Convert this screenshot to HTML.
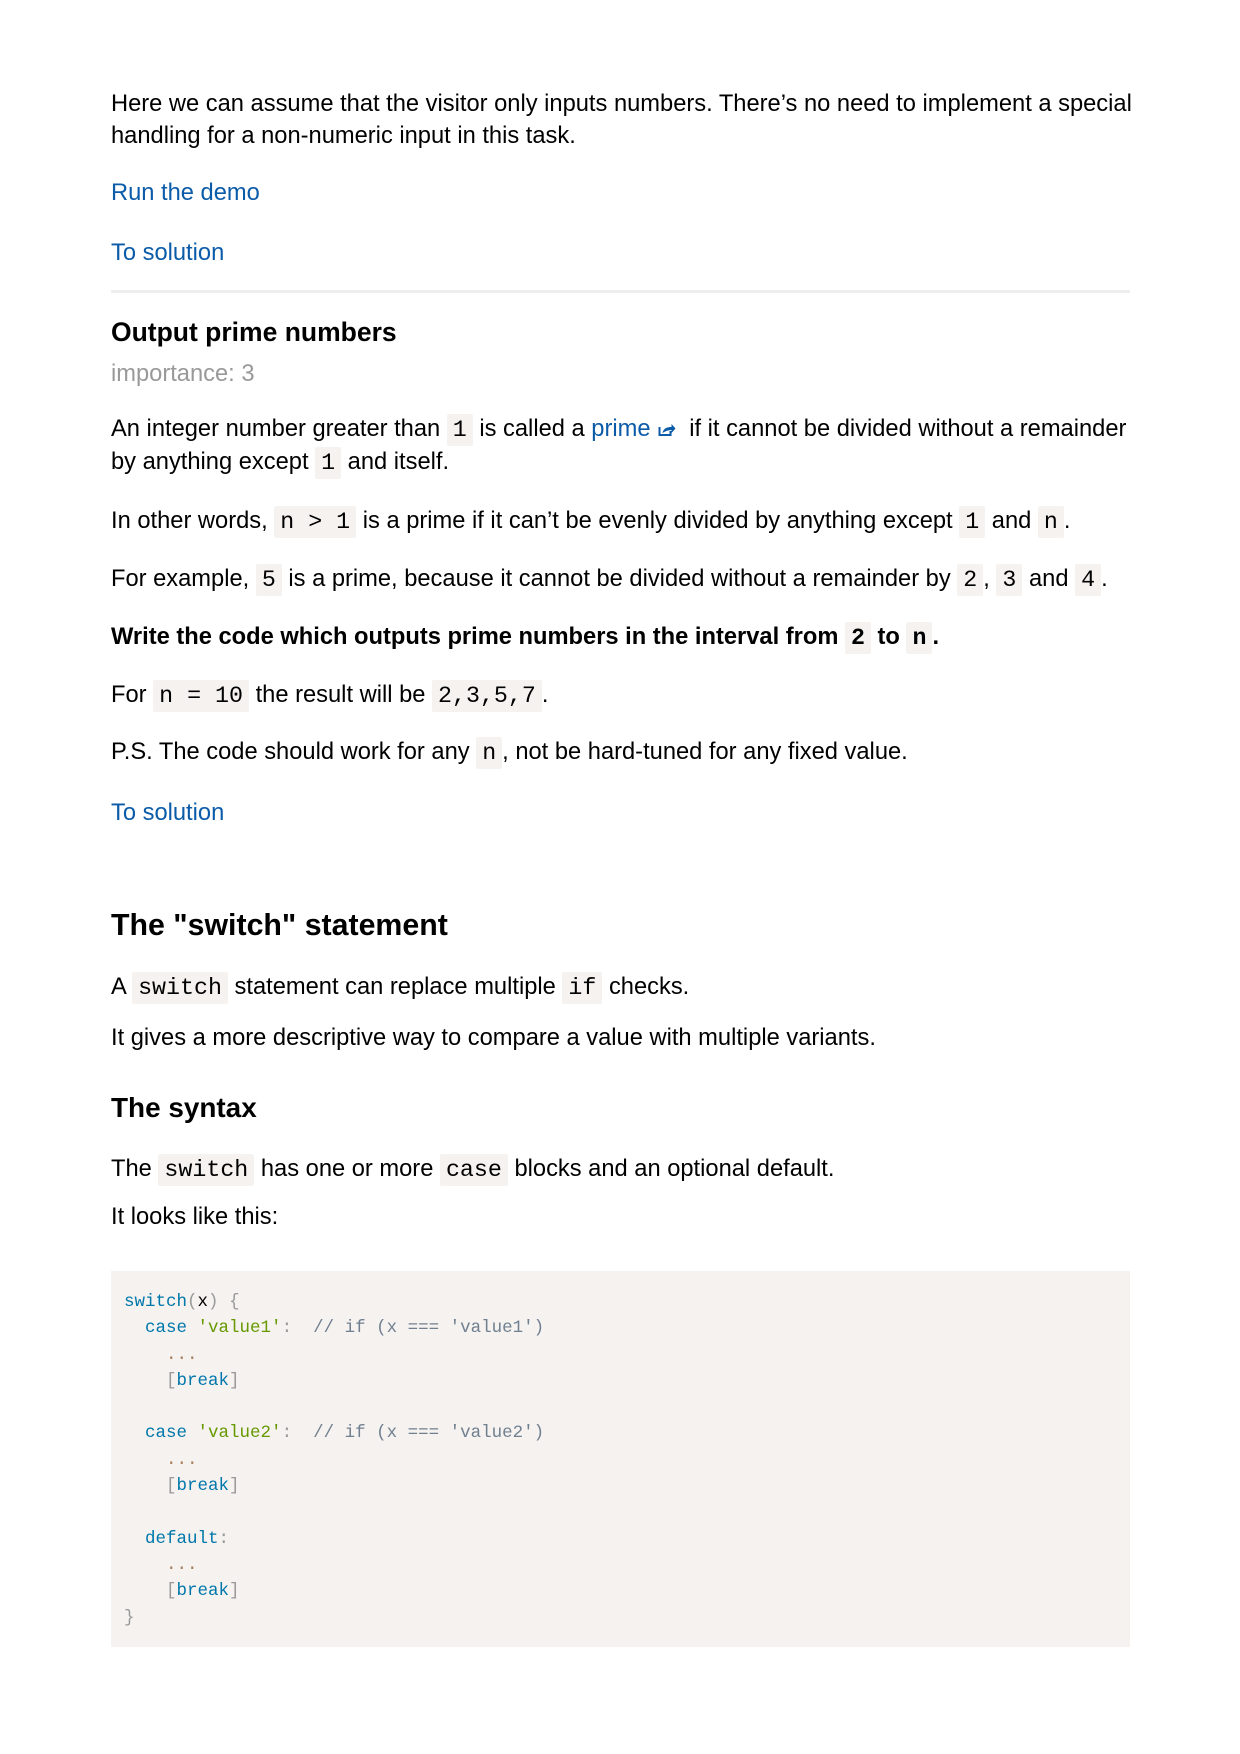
<!DOCTYPE html>
<html><head><meta charset="utf-8"><style>
body{margin:0;width:1240px;height:1754px;background:#fff;position:relative;font-family:"Liberation Sans",Arial,sans-serif;color:#000;font-size:23.7px}
.l{position:absolute;left:111px;white-space:nowrap;line-height:32px;height:32px}
a{color:#0b5ba9;text-decoration:none}
code{font-family:"Liberation Mono",monospace;font-size:23.3px;background:#f5f2f0;padding:3px 6px;border-radius:2px}
.b{font-weight:bold}
pre{position:absolute;left:111px;top:1271px;width:1019px;height:376px;margin:0;background:#f5f2f0;box-sizing:border-box;padding:18px 13px;font-family:"Liberation Mono",monospace;font-size:17.5px;line-height:26.3px;color:#000}
.k{color:#07a}.s{color:#690}.c{color:#708090}.p{color:#999}.o{color:#a67f59}
</style></head><body>
<div class="l" style="top:88px">Here we can assume that the visitor only inputs numbers. There’s no need to implement a special</div>
<div class="l" style="top:120px">handling for a non-numeric input in this task.</div>
<div class="l" style="top:177px"><a>Run the demo</a></div>
<div class="l" style="top:237px"><a>To solution</a></div>
<div style="position:absolute;left:111px;top:290px;width:1019px;height:3px;background:#eee"></div>
<div class="l b" style="top:316px;font-size:26.5px">Output prime numbers</div>
<div class="l" style="top:358px;color:#999">importance: 3</div>
<div class="l" style="top:413px">An integer number greater than <code>1</code> is called a <a>prime <svg width="19" height="16" viewBox="0 0 18 16" style="vertical-align:-1px"><path d="M2 6v8h11v-4" fill="none" stroke="#0b5ba9" stroke-width="2"/><path d="M5 12c1-5 5-6 9-6V3l4 4.5-4 4.5V9c-3 0-6 1-9 3z" fill="#0b5ba9"/></svg></a>&nbsp; if it cannot be divided without a remainder</div>
<div class="l" style="top:446px">by anything except <code>1</code> and itself.</div>
<div class="l" style="top:505px">In other words, <code>n &gt; 1</code> is a prime if it can’t be evenly divided by anything except <code>1</code> and <code>n</code>.</div>
<div class="l" style="top:563px">For example, <code>5</code> is a prime, because it cannot be divided without a remainder by <code>2</code>, <code>3</code> and <code>4</code>.</div>
<div class="l b" style="top:621px">Write the code which outputs prime numbers in the interval from <code>2</code> to <code>n</code>.</div>
<div class="l" style="top:679px">For <code>n = 10</code> the result will be <code>2,3,5,7</code>.</div>
<div class="l" style="top:736px">P.S. The code should work for any <code>n</code>, not be hard-tuned for any fixed value.</div>
<div class="l" style="top:797px"><a>To solution</a></div>
<div class="l b" style="top:908px;font-size:30.3px;height:36px;line-height:36px">The "switch" statement</div>
<div class="l" style="top:971px">A <code>switch</code> statement can replace multiple <code>if</code> checks.</div>
<div class="l" style="top:1022px">It gives a more descriptive way to compare a value with multiple variants.</div>
<div class="l b" style="top:1092px;font-size:27.9px">The syntax</div>
<div class="l" style="top:1153px">The <code>switch</code> has one or more <code>case</code> blocks and an optional default.</div>
<div class="l" style="top:1201px">It looks like this:</div>
<pre><span class="k">switch</span><span class="p">(</span>x<span class="p">)</span> <span class="p">{</span>
  <span class="k">case</span> <span class="s">'value1'</span><span class="p">:</span>  <span class="c">// if (x === 'value1')</span>
    <span class="o">...</span>
    <span class="p">[</span><span class="k">break</span><span class="p">]</span>

  <span class="k">case</span> <span class="s">'value2'</span><span class="p">:</span>  <span class="c">// if (x === 'value2')</span>
    <span class="o">...</span>
    <span class="p">[</span><span class="k">break</span><span class="p">]</span>

  <span class="k">default</span><span class="p">:</span>
    <span class="o">...</span>
    <span class="p">[</span><span class="k">break</span><span class="p">]</span>
<span class="p">}</span></pre>
</body></html>
